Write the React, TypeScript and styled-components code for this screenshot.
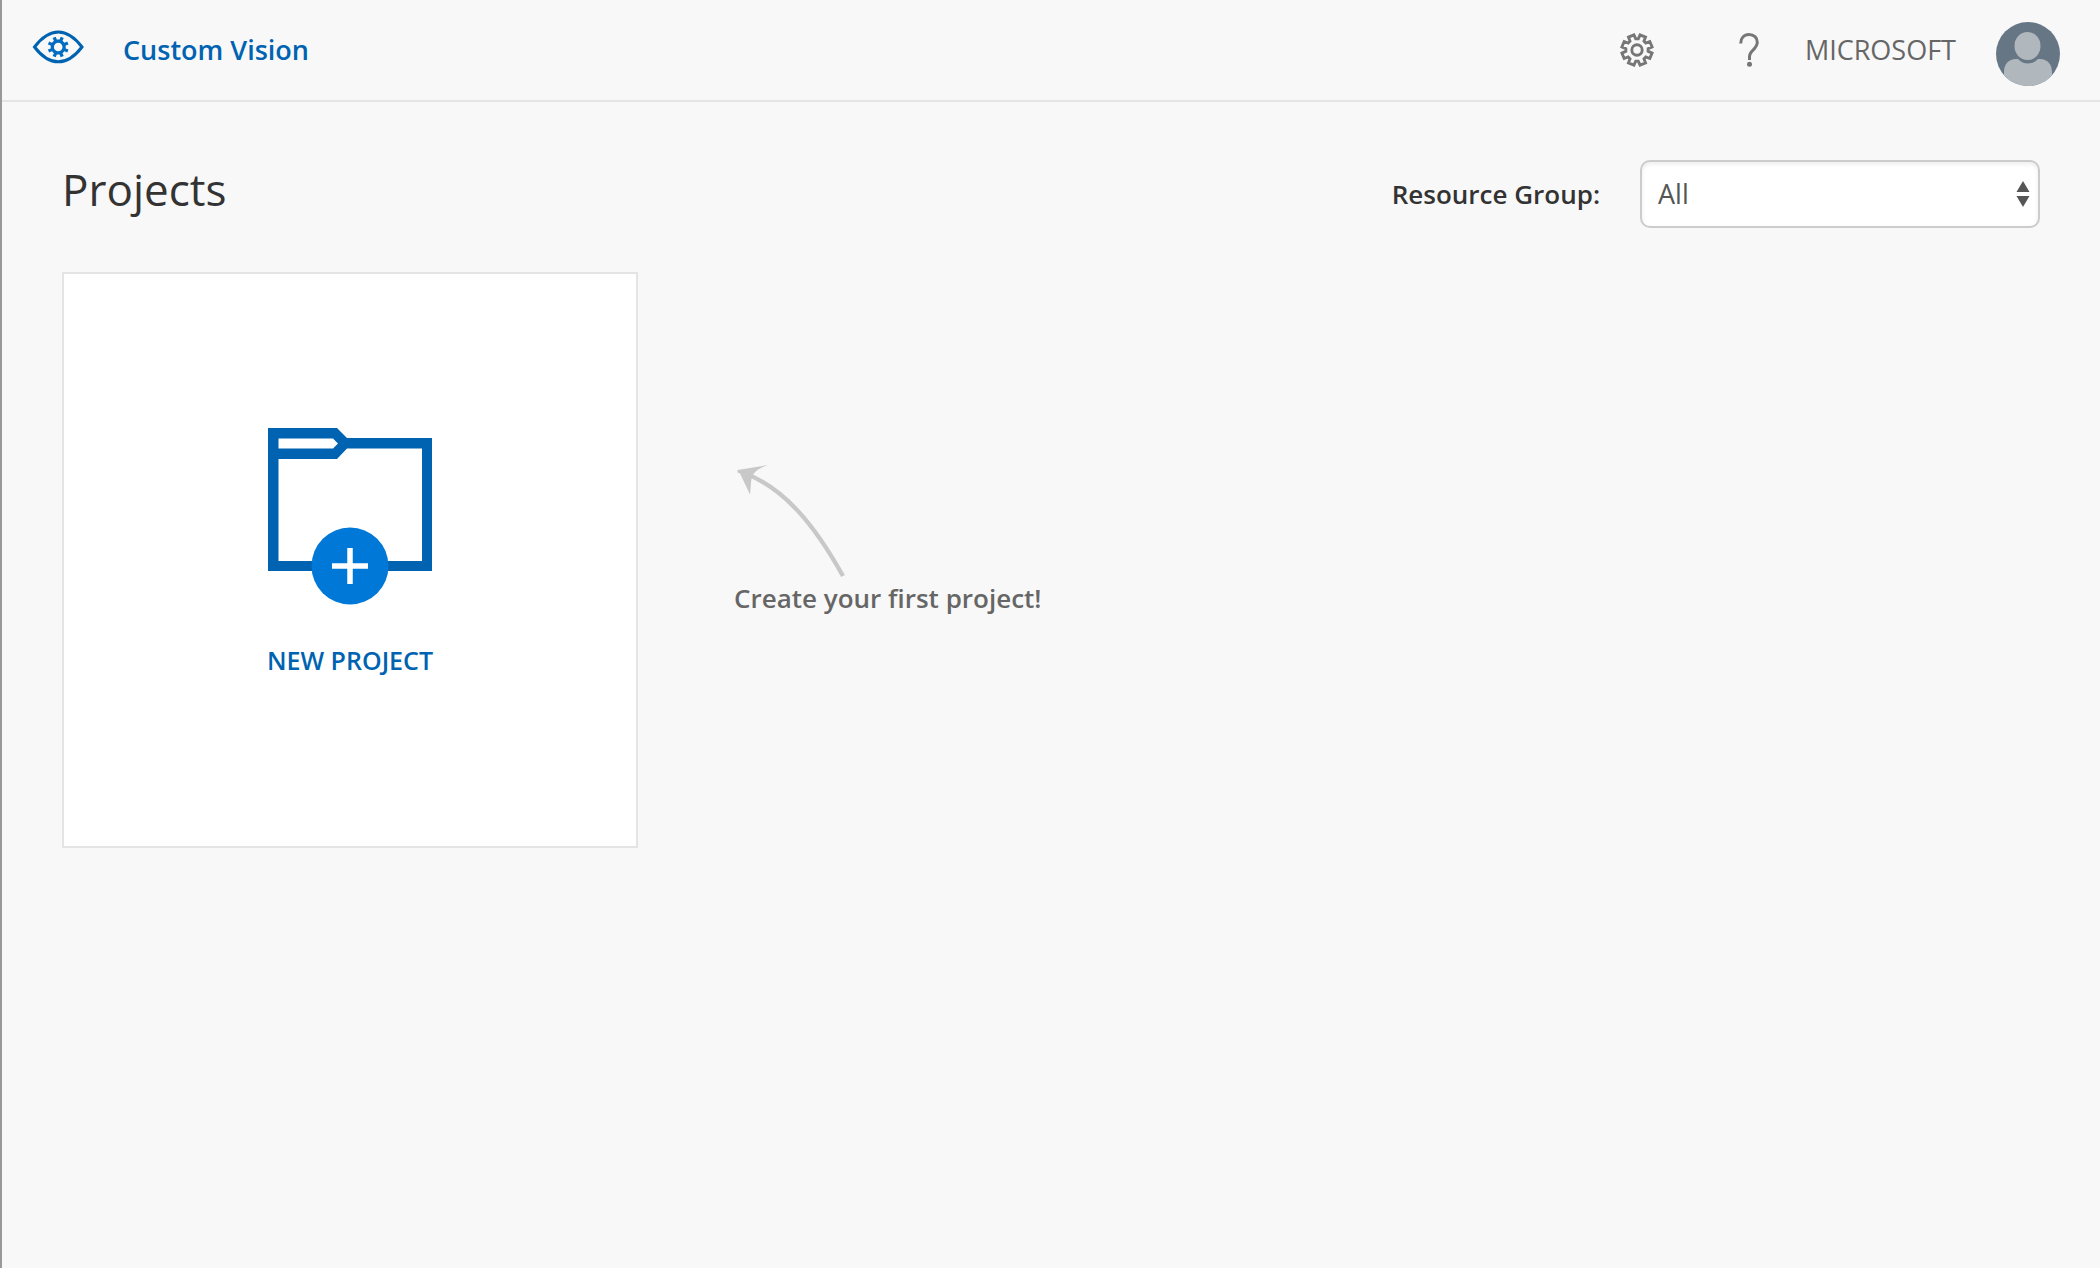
import React from "react";
import styled, { createGlobalStyle } from "styled-components";

const color = {
  page: "#f8f8f8",
  line: "#e5e5e5",
  brand: "#0063b1",
  accent: "#0078d7",
  text: "#333333",
  muted: "#666666",
  icon: "#767676",
  arrow: "#c8c8c8",
};

const GlobalStyle = createGlobalStyle`
  *, *::before, *::after { box-sizing: border-box; }
  body {
    margin: 0;
    background: ${color.page};
    color: ${color.text};
    font-family: "Segoe UI", "Open Sans", "Noto Sans", sans-serif;
    font-size: 27px;
    line-height: 36px;
  }
`;

const Page = styled.div`
  min-height: 100vh;
  border-left: 2px solid #999999;
`;

const Header = styled.header`
  display: flex;
  align-items: center;
  justify-content: space-between;
  padding: 0 40px 0 30px;
  height: 102px;
  border-bottom: 2px solid ${color.line};
`;

const Brand = styled.a`
  display: flex;
  align-items: center;
  gap: 37px;
  color: ${color.brand};
  font-weight: 600;
  text-decoration: none;

  svg {
    margin-bottom: 6px;
  }
`;

const Tools = styled.div`
  display: flex;
  align-items: center;
`;

const IconButton = styled.button`
  display: flex;
  align-items: center;
  justify-content: center;
  width: 112px;
  height: 56px;
  padding: 0;
  border: 0;
  background: none;
  color: ${color.icon};
  cursor: pointer;
`;

const Tenant = styled.span`
  color: ${color.muted};
`;

const AvatarButton = styled.button`
  display: block;
  width: 64px;
  height: 64px;
  margin: 8px 0 0 40px;
  padding: 0;
  border: 0;
  border-radius: 50%;
  overflow: hidden;
  background: none;
  cursor: pointer;

  svg {
    display: block;
  }
`;

const Main = styled.main`
  padding: 58px 60px;
`;

const TitleBar = styled.div`
  display: flex;
  align-items: flex-start;
  justify-content: space-between;
  margin-bottom: 44px;
`;

const Title = styled.h1`
  margin: 0;
  font-size: 44px;
  font-weight: 400;
  line-height: 58px;
`;

const Filter = styled.div`
  display: flex;
  align-items: center;
  gap: 40px;
`;

const FilterLabel = styled.label`
  font-size: 26px;
  font-weight: 600;
`;

const SelectBox = styled.div`
  position: relative;
  width: 400px;

  svg {
    position: absolute;
    top: 20px;
    right: 10px;
    pointer-events: none;
  }
`;

const Select = styled.select`
  display: block;
  appearance: none;
  width: 100%;
  height: 68px;
  padding: 0 40px 0 16px;
  border: 2px solid #cccccc;
  border-radius: 10px;
  background: #ffffff;
  box-shadow: inset 0 2px 4px rgba(0, 0, 0, 0.08);
  color: #555555;
  font: inherit;
`;

const Projects = styled.section`
  display: flex;
  align-items: flex-start;
  gap: 96px;
`;

const NewProject = styled.button`
  display: flex;
  flex-direction: column;
  align-items: center;
  justify-content: center;
  gap: 38px;
  width: 576px;
  aspect-ratio: 1;
  padding: 0 0 16px;
  border: 2px solid #e4e4e4;
  background: #ffffff;
  color: ${color.brand};
  font: inherit;
  font-size: 25px;
  font-weight: 600;
  line-height: 32px;
  cursor: pointer;
`;

const Hint = styled.div`
  display: flex;
  flex-direction: column;
  gap: 2px;
  padding-top: 192px;
  color: ${color.muted};
  font-size: 26px;
  font-weight: 600;
`;

/** Outline of an eight-tooth cog, with a gap between teeth straight up. */
function cogPath(cx: number, cy: number, outer: number, inner: number, tip: number, base: number) {
  const points: string[] = [];
  for (let i = 0; i < 8; i++) {
    const mid = 22.5 + i * 45;
    const corners = [
      [mid - base, inner],
      [mid - tip, outer],
      [mid + tip, outer],
      [mid + base, inner],
    ];
    for (const [deg, r] of corners) {
      const a = (deg * Math.PI) / 180;
      points.push(`${(cx + r * Math.sin(a)).toFixed(2)} ${(cy - r * Math.cos(a)).toFixed(2)}`);
    }
  }
  return `M${points.join("L")}Z`;
}

const EyeLogo = () => (
  <svg width="54" height="36" viewBox="0 0 54 36" fill="none" aria-hidden="true">
    <path
      d="M2.500 18C9 9.500 17 3 26.300 3C36 3 43.500 9.500 50 18C43.500 26.500 36 32.800 26.300 32.800C17 32.800 9 26.500 2.500 18Z"
      stroke={color.brand}
      strokeWidth="3"
    />
    <path
      fillRule="evenodd"
      d={`${cogPath(26.2, 18, 10.6, 7.6, 9, 12)}M30.500 18A4.300 4.300 0 1 0 21.900 18A4.300 4.300 0 1 0 30.500 18Z`}
      fill="#006cc2"
    />
  </svg>
);

const CogIcon = () => (
  <svg width="36" height="36" viewBox="0 0 36 36" fill="none" stroke="currentColor" aria-hidden="true">
    <path d={cogPath(18, 18, 15.4, 11.2, 11, 16)} strokeWidth="2.9" />
    <circle cx="18" cy="18" r="5.2" strokeWidth="2.9" />
  </svg>
);

const HelpIcon = () => (
  <svg width="36" height="36" viewBox="0 0 36 36" fill="none" aria-hidden="true">
    <path
      d="M9.700 11.500C9.700 6.200 13 2.500 18 2.500C23 2.500 26.300 5.800 26.300 10.200C26.300 17 18.500 18.500 18.500 24.500V28"
      stroke="currentColor"
      strokeWidth="3"
    />
    <circle cx="18.500" cy="32.200" r="2.500" fill="currentColor" />
  </svg>
);

const Avatar = () => (
  <svg width="64" height="64" viewBox="0 0 64 64" aria-hidden="true">
    <rect width="64" height="64" fill="#667685" />
    <path
      d="M8 64V50C8 42 13 37 20 37H22C25 40 28 41.500 32 41.500C36 41.500 39 40 42 37H44C51 37 56 42 56 50V64Z"
      fill="#b1b8bd"
    />
    <ellipse cx="31.500" cy="24" rx="13" ry="14" fill="#b1b8bd" />
  </svg>
);

const SelectArrows = () => (
  <svg width="14" height="28" viewBox="0 0 14 28" fill="#555555" aria-hidden="true">
    <path d="M7 1L13.500 12H0.500Z" />
    <path d="M7 27L13.500 16H0.500Z" />
  </svg>
);

const FolderPlus = () => (
  <svg width="164" height="178" viewBox="0 0 164 178" aria-hidden="true">
    <path
      fillRule="evenodd"
      fill={color.brand}
      d="M0 0H69L79 10H164V143H0ZM10.500 10.500V20.500H65L70 15.500L65 10.500ZM10.500 31V133H154V20.500H79L69 31Z"
    />
    <circle cx="82" cy="138" r="38.500" fill={color.accent} />
    <path d="M82 120V156M64 138H100" stroke="#ffffff" strokeWidth="5.500" />
  </svg>
);

const HintArrow = () => (
  <svg width="112" height="114" viewBox="0 0 112 114" aria-hidden="true">
    <path d="M10 9C50 24 80 60 109 112" fill="none" stroke={color.arrow} strokeWidth="4.400" />
    <path d="M3.500 6L34 1C25 4 20 8 18.500 12C16.500 16 17 23 16 30.500L6 9.500L3.500 8.500Z" fill={color.arrow} />
  </svg>
);

export default function App() {
  return (
    <>
      <GlobalStyle />
      <Page>
        <Header>
          <Brand href="#">
            <EyeLogo />
            Custom Vision
          </Brand>
          <Tools>
            <IconButton aria-label="Settings">
              <CogIcon />
            </IconButton>
            <IconButton aria-label="Help">
              <HelpIcon />
            </IconButton>
            <Tenant>MICROSOFT</Tenant>
            <AvatarButton aria-label="Account">
              <Avatar />
            </AvatarButton>
          </Tools>
        </Header>
        <Main>
          <TitleBar>
            <Title>Projects</Title>
            <Filter>
              <FilterLabel htmlFor="resource-group">Resource Group:</FilterLabel>
              <SelectBox>
                <Select id="resource-group" defaultValue="all">
                  <option value="all">All</option>
                </Select>
                <SelectArrows />
              </SelectBox>
            </Filter>
          </TitleBar>
          <Projects>
            <NewProject>
              <FolderPlus />
              NEW PROJECT
            </NewProject>
            <Hint>
              <HintArrow />
              Create your first project!
            </Hint>
          </Projects>
        </Main>
      </Page>
    </>
  );
}
